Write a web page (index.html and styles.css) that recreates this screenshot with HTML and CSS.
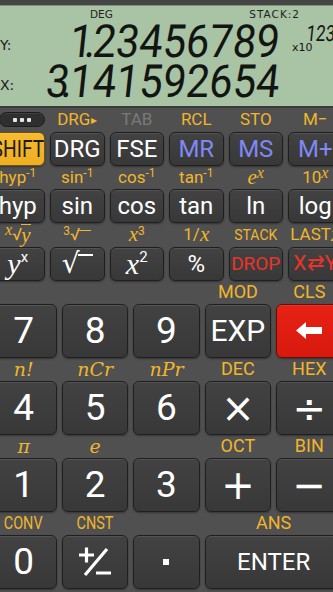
FILE: index.html
```html
<!DOCTYPE html>
<html lang="en">
<head>
    <meta charset="utf-8">
    <title>RealCalc</title>
    <meta name="viewport" content="width=device-width, initial-scale=1">
    <link rel="stylesheet" href="styles.css">
</head>
<body>

<div class="calc">

    <div class="top-bar"></div>

    <!-- дисплей -->
    <div class="lcd">
        <div class="lcd-status">
            <span class="lcd-deg">DEG</span>
            <span class="lcd-stack">STACK:2</span>
        </div>
        <div class="lcd-row">
            <span class="lcd-reg">Y:</span>
            <span class="lcd-num">1<span class="dp">.</span>23456789</span>
            <span class="lcd-side">
                <span class="lcd-mini">123</span>
                <span class="lcd-x10">x10</span>
            </span>
        </div>
        <div class="lcd-row">
            <span class="lcd-reg">X:</span>
            <span class="lcd-num">3<span class="dp">.</span>141592654</span>
            <span class="lcd-side"></span>
        </div>
    </div>

    <!-- клавіатура -->
    <div class="pad">
        <div class="keys keys-fn">
            <div class="cell">
                <div class="lbl lbl-menu"><span class="menu"><span></span><span></span><span></span></span></div>
                <button class="key key-shift"><span class="squeeze">SHIFT</span></button>
            </div>
            <div class="cell">
                <div class="lbl">DRG<span class="tri">&#9656;</span></div>
                <button class="key">DRG</button>
            </div>
            <div class="cell">
                <div class="lbl lbl-dim">TAB</div>
                <button class="key">FSE</button>
            </div>
            <div class="cell">
                <div class="lbl">RCL</div>
                <button class="key key-mem">MR</button>
            </div>
            <div class="cell">
                <div class="lbl">STO</div>
                <button class="key key-mem">MS</button>
            </div>
            <div class="cell">
                <div class="lbl">M&minus;</div>
                <button class="key key-mem">M+</button>
            </div>

            <div class="cell">
                <div class="lbl">hyp<sup>-1</sup></div>
                <button class="key">hyp</button>
            </div>
            <div class="cell">
                <div class="lbl">sin<sup>-1</sup></div>
                <button class="key">sin</button>
            </div>
            <div class="cell">
                <div class="lbl">cos<sup>-1</sup></div>
                <button class="key">cos</button>
            </div>
            <div class="cell">
                <div class="lbl">tan<sup>-1</sup></div>
                <button class="key">tan</button>
            </div>
            <div class="cell">
                <div class="lbl"><span class="it">e</span><sup class="it">x</sup></div>
                <button class="key">ln</button>
            </div>
            <div class="cell">
                <div class="lbl">10<sup class="it">x</sup></div>
                <button class="key">log</button>
            </div>

            <div class="cell">
                <div class="lbl"><sup class="it">x</sup>&radic;<span class="ov it">y</span></div>
                <button class="key"><span class="it">y</span><sup>x</sup></button>
            </div>
            <div class="cell">
                <div class="lbl"><sup>3</sup>&radic;<span class="ov ov-empty"></span></div>
                <button class="key key-sqrt">&radic;<span class="ov ov-empty"></span></button>
            </div>
            <div class="cell">
                <div class="lbl"><span class="it">x</span><sup>3</sup></div>
                <button class="key"><span class="it">x</span><sup>2</sup></button>
            </div>
            <div class="cell">
                <div class="lbl">1/<span class="it">x</span></div>
                <button class="key">%</button>
            </div>
            <div class="cell">
                <div class="lbl lbl-small">STACK</div>
                <button class="key key-red-text key-drop">DROP</button>
            </div>
            <div class="cell">
                <div class="lbl">LAST<span class="it">x</span></div>
                <button class="key key-red-text key-swap">X&#8644;Y</button>
            </div>
        </div>

        <div class="keys keys-num">
            <div class="cell">
                <div class="lbl"></div>
                <button class="key">7</button>
            </div>
            <div class="cell">
                <div class="lbl"></div>
                <button class="key">8</button>
            </div>
            <div class="cell">
                <div class="lbl"></div>
                <button class="key">9</button>
            </div>
            <div class="cell">
                <div class="lbl">MOD</div>
                <button class="key key-exp">EXP</button>
            </div>
            <div class="cell">
                <div class="lbl">CLS</div>
                <button class="key key-back" aria-label="backspace">
                    <svg width="26" height="17" viewBox="0 0 26 17">
                        <polygon points="0,8.5 10,0 10,5 26,5 26,12 10,12 10,17" fill="#fff"/>
                    </svg>
                </button>
            </div>

            <div class="cell">
                <div class="lbl lbl-serif">n!</div>
                <button class="key">4</button>
            </div>
            <div class="cell">
                <div class="lbl lbl-serif">nCr</div>
                <button class="key">5</button>
            </div>
            <div class="cell">
                <div class="lbl lbl-serif">nPr</div>
                <button class="key">6</button>
            </div>
            <div class="cell">
                <div class="lbl">DEC</div>
                <button class="key key-op">&times;</button>
            </div>
            <div class="cell">
                <div class="lbl">HEX</div>
                <button class="key key-op">&divide;</button>
            </div>

            <div class="cell">
                <div class="lbl lbl-serif">&pi;</div>
                <button class="key">1</button>
            </div>
            <div class="cell">
                <div class="lbl lbl-serif">e</div>
                <button class="key">2</button>
            </div>
            <div class="cell">
                <div class="lbl"></div>
                <button class="key">3</button>
            </div>
            <div class="cell">
                <div class="lbl">OCT</div>
                <button class="key key-op">+</button>
            </div>
            <div class="cell">
                <div class="lbl">BIN</div>
                <button class="key key-op">&minus;</button>
            </div>

            <div class="cell">
                <div class="lbl"><span class="squeeze">CONV</span></div>
                <button class="key">0</button>
            </div>
            <div class="cell">
                <div class="lbl"><span class="squeeze">CNST</span></div>
                <button class="key" aria-label="plus minus">
                    <svg width="36" height="32" viewBox="0 0 36 32">
                        <path d="M2 9h15M9.5 1.5v15M30 3L8 29M19 27h15" stroke="#fff" stroke-width="3.2" fill="none"/>
                    </svg>
                </button>
            </div>
            <div class="cell">
                <div class="lbl"></div>
                <button class="key"><span class="point"></span></button>
            </div>
            <div class="cell cell-wide">
                <div class="lbl">ANS</div>
                <button class="key key-enter">ENTER</button>
            </div>
        </div>
    </div>

</div>

</body>
</html>
```

FILE: styles.css
```css
html, body {
    margin: 0;
    padding: 0;
    overflow: hidden;
}

body {
    font: normal 16px/1 Roboto, "Noto Sans", sans-serif;
    background: #505050;
    color: #fff;
}

.calc {
    width: 333px;
    height: 592px;
    overflow: hidden;
}

.top-bar {
    height: 5px;
    background: #454545;
}

/* дисплей */

.lcd {
    height: 98px;
    padding: 2px 0 0 0;
    background: #a9c3a5;
    border-top: 1px solid #7f8f7c;
    border-bottom: 2px solid #3a3a3a;
    color: #141814;
    overflow: hidden;
}

    .lcd-status {
        display: flex;
        height: 12px;
        padding: 0 33px 0 90px;
        font: normal 10.5px/12px "DejaVu Sans", sans-serif;
        color: #222;
    }

        .lcd-stack {
            margin-left: auto;
            letter-spacing: 1px;
        }

    .lcd-row {
        display: grid;
        grid-template-columns: 40px 1fr 51px;
        height: 40px;
    }

        .lcd-reg {
            align-self: end;
            padding: 0 0 8px 0;
            font: normal 14px/14px "DejaVu Sans", sans-serif;
            color: #1c1c1c;
        }

        .lcd-num {
            display: block;
            text-align: right;
            font: normal 41.5px/40px Roboto, sans-serif;
            font-variant-numeric: tabular-nums;
            color: #121512;
            transform-origin: right top;
            transform: skewX(-6deg) scaleY(1.1);
            white-space: nowrap;
        }

            .dp {
                display: inline-block;
                width: 0;
                margin: 0 8px 0 -8px;
            }

        .lcd-side {
            display: flex;
            flex-direction: column;
        }

            .lcd-mini {
                display: block;
                height: 22px;
                padding-left: 26px;
                font: normal 17px/20px Roboto, sans-serif;
                transform-origin: left top;
                transform: skewX(-6deg) scaleY(1.3);
                white-space: nowrap;
            }

            .lcd-x10 {
                padding-left: 10px;
                font: normal 11px/12px "DejaVu Sans", sans-serif;
            }

/* клавіатура */

.pad {
    width: 352px;
    margin-left: -9.5px;
}

    .keys {
        display: grid;
        column-gap: 5px;
    }

    .keys-fn {
        grid-template-columns: repeat(6, 1fr);
    }

    .keys-num {
        grid-template-columns: repeat(5, 1fr);
    }

        .cell {
            display: flex;
            flex-direction: column;
            min-width: 0;
        }

        .cell-wide {
            grid-column: span 2;
        }

            .lbl {
                display: flex;
                align-items: center;
                justify-content: center;
                height: 23.5px;
                font: normal 17px/1 Roboto, sans-serif;
                color: #f1b62c;
                white-space: nowrap;
            }

            .keys-num .lbl {
                font-size: 18px;
            }

            .lbl sup {
                font-size: 12px;
                margin-top: -8px;
            }

            .lbl .it {
                font-size: 21px;
            }

            .lbl sup.it {
                font-size: 16px;
                margin-top: -9px;
            }

            .lbl-dim {
                color: #7a7a7a;
            }

            .lbl-small {
                font-size: 14px;
            }

            .keys-num .lbl-serif {
                font: italic 19px/1 "DejaVu Serif", serif;
            }

            .lbl-menu {
                justify-content: flex-end;
            }

                .menu {
                    display: flex;
                    align-items: center;
                    justify-content: center;
                    gap: 3px;
                    width: 44px;
                    height: 13px;
                    background: #2f2f2f;
                    border: 1px solid #1d1d1d;
                    border-radius: 8px;
                    box-shadow: inset 0 1px 0 rgba(255,255,255,0.08);
                }

                    .menu span {
                        width: 4px;
                        height: 4px;
                        border-radius: 1px;
                        background: #e8e8e8;
                    }

            .tri {
                font-size: 12px;
                margin-left: 1px;
            }

            .it {
                font-family: "Liberation Serif", serif;
                font-style: italic;
            }

            .ov {
                display: inline-block;
                border-top: 1.5px solid currentColor;
                line-height: 1;
                margin-left: -1px;
            }

            .lbl .ov-empty {
                width: 12px;
                height: 10px;
                margin-top: 1px;
            }

            .squeeze {
                display: inline-block;
                transform: scaleX(0.8);
            }

            .key {
                display: flex;
                align-items: center;
                justify-content: center;
                box-sizing: border-box;
                width: 100%;
                height: 34px;
                margin: 0;
                padding: 0;
                font: normal 24px/1 Roboto, sans-serif;
                color: #fff;
                background: linear-gradient(#424242, #383838);
                border: 1px solid #1f1f1f;
                border-radius: 6px;
                box-shadow: inset 0 1px 0 rgba(255,255,255,0.09), 0 1px 2px rgba(0,0,0,0.35);
                white-space: nowrap;
                overflow: hidden;
            }

            .keys-num .key {
                height: 53.5px;
                font-size: 37px;
            }

            .key sup {
                font-family: Roboto, sans-serif;
                font-style: normal;
                font-size: 15px;
                margin-top: -12px;
            }

            .key .it {
                font-size: 30px;
            }

            .key-shift {
                background: linear-gradient(#f6bb30, #eeae22);
                color: #1f1a10;
                border-color: #6d5212;
            }

            .key-mem {
                color: #7f88f4;
            }

            .key-red-text {
                color: #ec3329;
            }

            .key-drop {
                font-size: 19px;
            }

            .key-swap {
                font-size: 21px;
            }

            .key-sqrt {
                font: normal 28px/1 "DejaVu Sans", sans-serif;
            }

                .key-sqrt .ov-empty {
                    width: 15px;
                    height: 22px;
                    margin: 4px 0 0 -2px;
                    border-top-width: 2px;
                }

            .keys-num .key-exp {
                font-size: 30px;
            }

            .keys-num .key-op {
                font: normal 40px/1 "DejaVu Sans", sans-serif;
            }

            .keys-num .key-enter {
                font-size: 24px;
            }

            .key-back {
                background: linear-gradient(#e52214, #d9190e);
                border-color: #6b0d07;
            }

            .point {
                width: 6px;
                height: 6px;
                background: #fff;
            }
```
